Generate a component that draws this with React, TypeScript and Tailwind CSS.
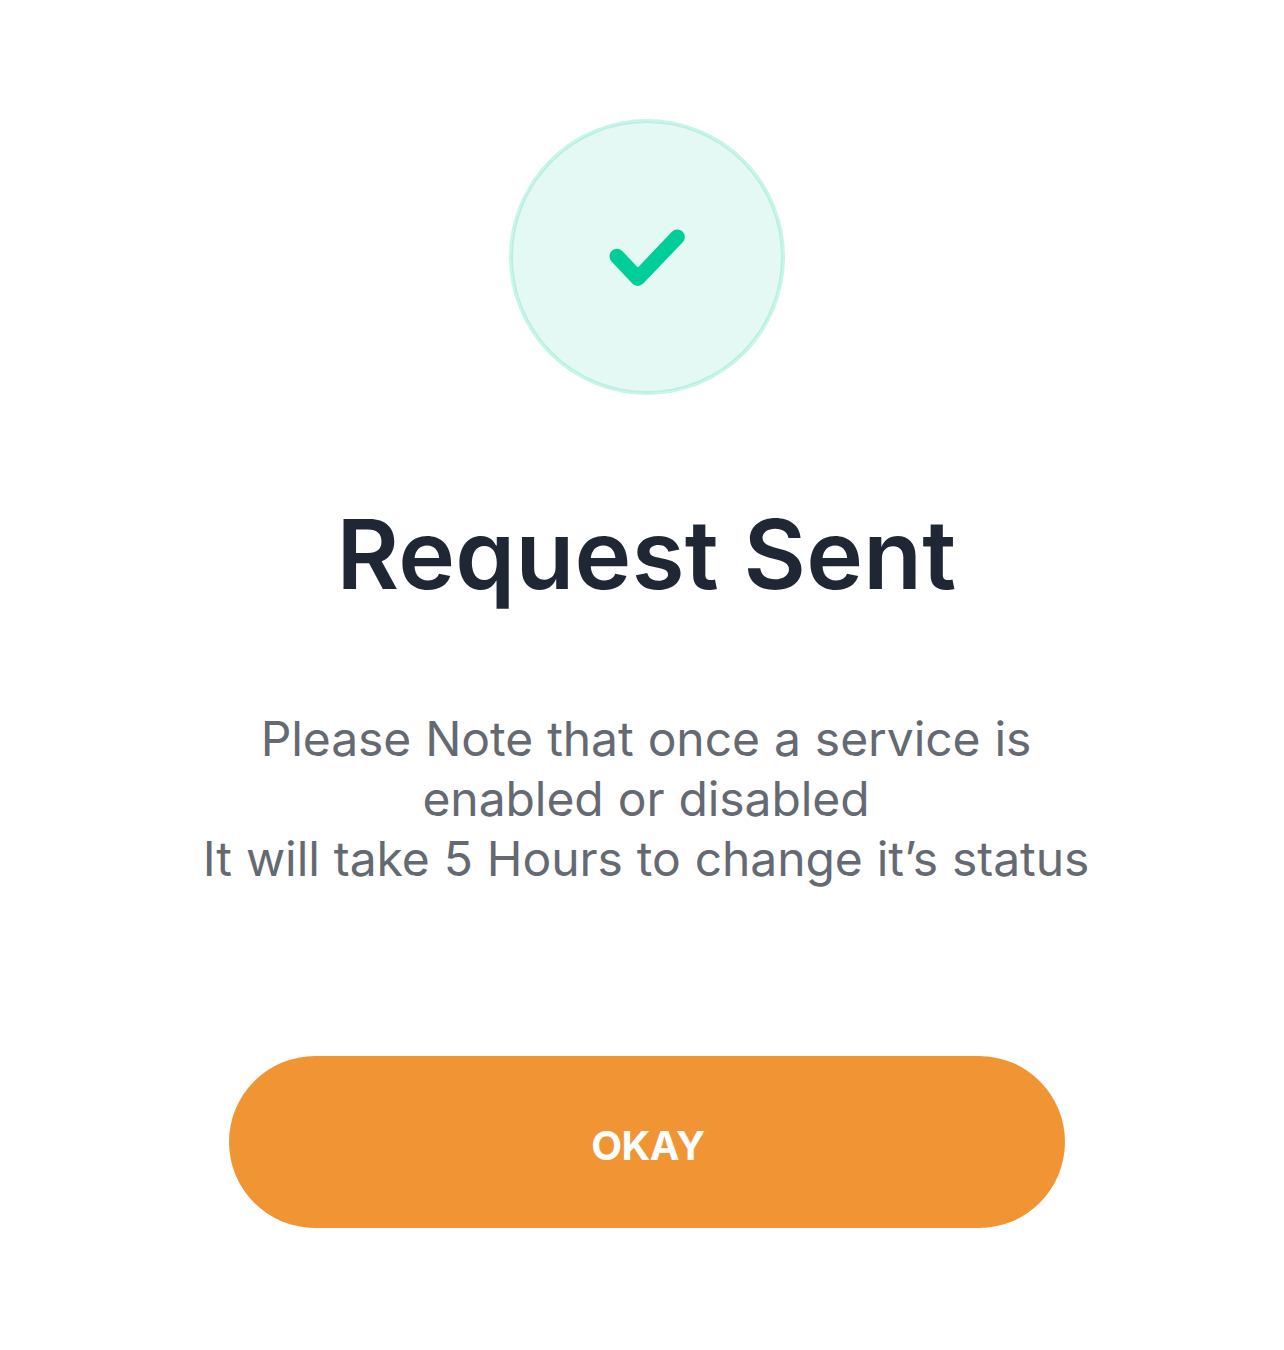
export default function App() {
  return (
    <main className="flex h-[1350px] w-[1284px] flex-col items-center bg-white pt-[119px] pl-2.5 text-center font-['Inter',sans-serif]">
      <div className="flex size-[276px] shrink-0 items-center justify-center rounded-full border-2 border-[#c9f5e9] bg-[#e4f9f4] inset-ring-2 inset-ring-[#b8f0e1]">
        <svg className="h-[58px] w-[78px] overflow-visible" viewBox="0 0 78 58" fill="none" aria-hidden="true">
          <path d="M9 28.3L29.8 50.4L69.3 9" stroke="#00ce98" strokeWidth="15" strokeLinecap="round" strokeLinejoin="round" />
        </svg>
      </div>
      <h1 className="mt-[99px] mr-px text-[96px] leading-[120px] font-semibold tracking-[0.3px] whitespace-nowrap text-[#1f2734]">Request Sent</h1>
      <p className="mt-[95px] mr-[2px] text-[48px] leading-[60px] tracking-[-0.07px] [word-spacing:0.6px] whitespace-nowrap text-[#646972]">
        Please Note that once a service is
        <br />
        enabled or disabled
        <br />
        It will take 5 Hours to change it’s status
      </p>
      <button className="mt-[167px] h-[172px] w-[836px] shrink-0 rounded-full bg-[#f19534] pt-2 pl-0.5 text-[40px] font-bold tracking-[-0.5px] text-white">OKAY</button>
    </main>
  );
}
